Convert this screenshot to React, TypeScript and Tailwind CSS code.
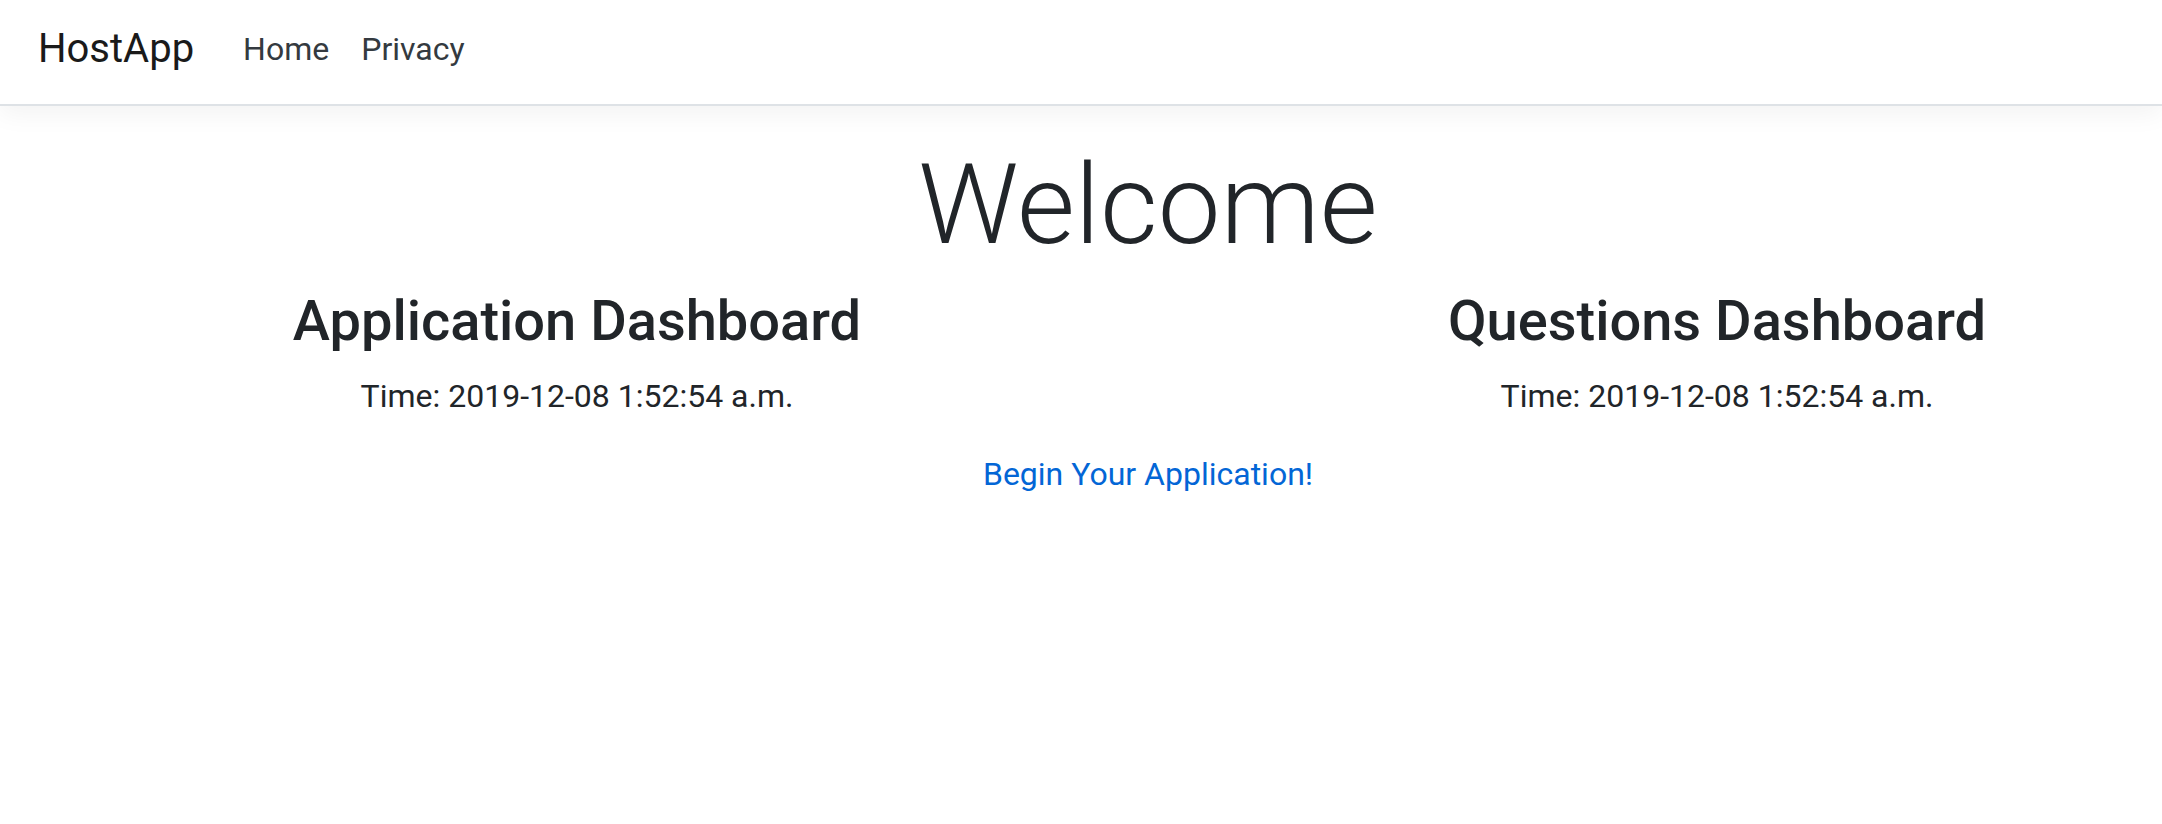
export default function App() {
  return (
    <div className="min-h-screen bg-white font-['Roboto',sans-serif] text-[#212529]">
      <nav className="relative flex h-[106px] items-center border-b-2 border-[#dee2e6] bg-white pb-[6px] pl-[38px] shadow-[0_8px_24px_rgba(0,0,0,0.05)]">
        <a className="mr-[33px] text-[40px] leading-[60px] text-[#1a1a1a]">HostApp</a>
        <a className="px-[16px] text-[32px] leading-[48px] text-[#343a40]">Home</a>
        <a className="px-[16px] text-[32px] leading-[48px] text-[#343a40]">Privacy</a>
      </nav>

      <main className="mt-[32px]">
        <div className="ml-[134px] text-center">
          <h1 className="mb-[16px] text-[112px] font-light leading-[1.2]">Welcome</h1>
        </div>

        <div className="flex gap-[500px] pl-[257px]">
          <div className="w-[640px] text-center">
            <h2 className="mb-[16px] whitespace-nowrap text-[56px] font-medium leading-[1.2]">Application Dashboard</h2>
            <p className="text-[32px] leading-[48px]">Time: 2019-12-08 1:52:54 a.m.</p>
          </div>
          <div className="w-[640px] text-center">
            <h2 className="mb-[16px] whitespace-nowrap text-[56px] font-medium leading-[1.2]">Questions Dashboard</h2>
            <p className="text-[32px] leading-[48px]">Time: 2019-12-08 1:52:54 a.m.</p>
          </div>
        </div>

        <div className="ml-[134px] mt-[30px] text-center">
          <a className="text-[32px] leading-[48px] text-[#0366d6]">Begin Your Application!</a>
        </div>
      </main>
    </div>
  );
}
